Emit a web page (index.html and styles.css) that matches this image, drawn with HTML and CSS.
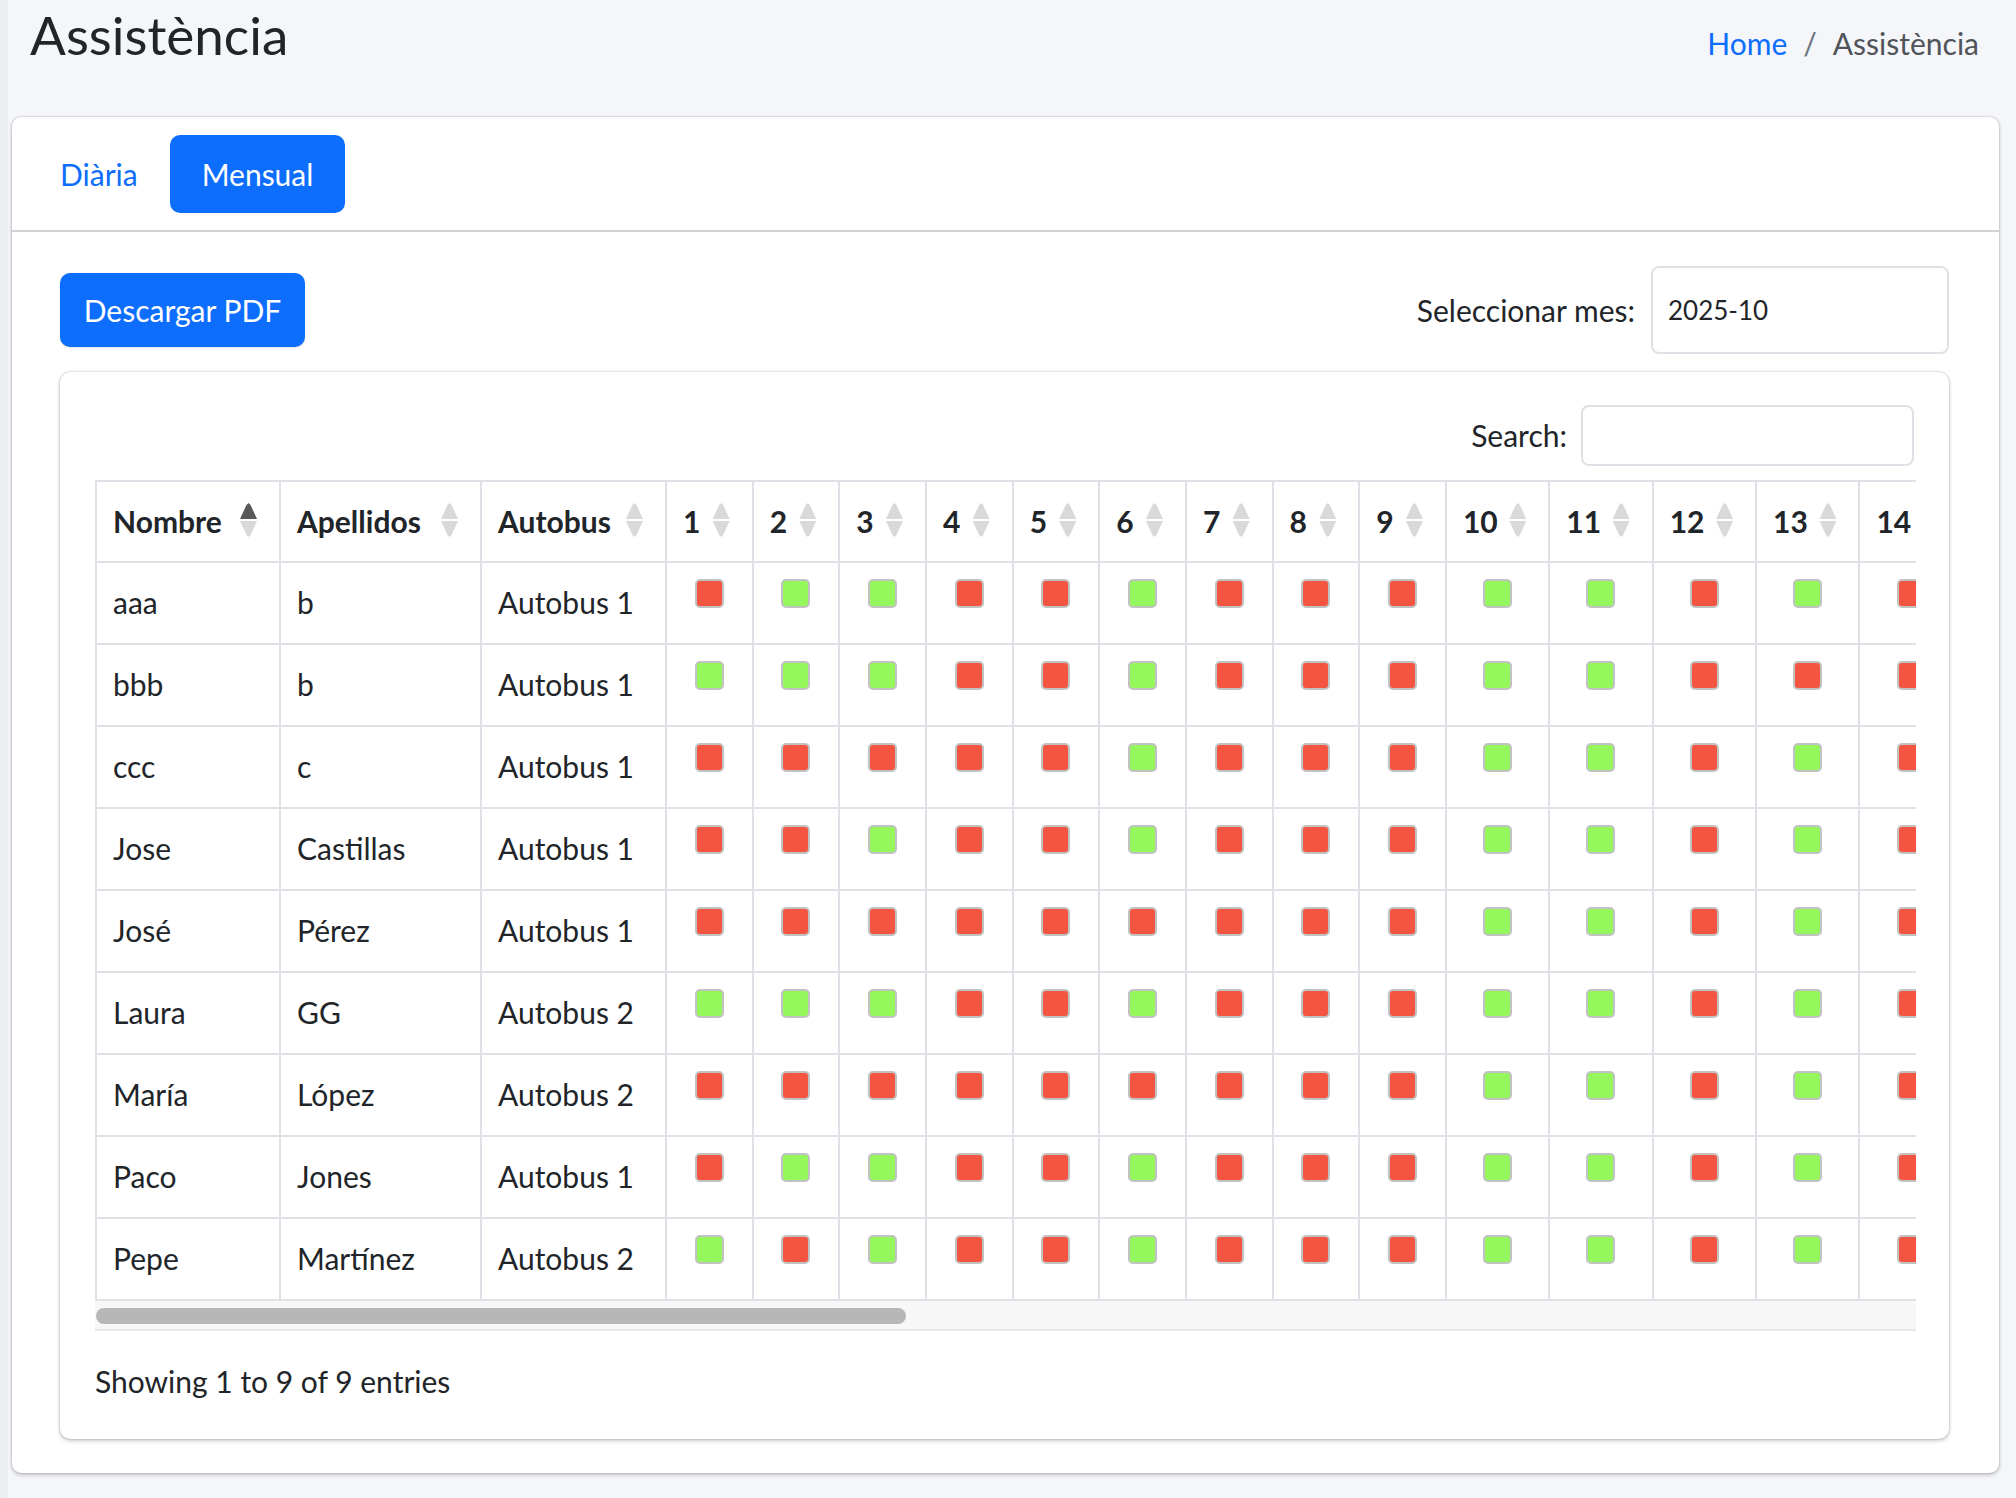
FILE: index.html
```html
<!DOCTYPE html>
<html lang="ca">
<head>
<meta charset="utf-8">
<title>Assistència</title>
<link rel="stylesheet" href="styles.css">
</head>
<body>
<div class="page">
  <header class="content-header">
    <h1 class="title">Assistència</h1>
    <ol class="breadcrumb">
      <li class="crumb"><a href="#" class="crumb-link">Home</a></li>
      <li class="crumb-sep">/</li>
      <li class="crumb active">Assistència</li>
    </ol>
  </header>

  <section class="card">
    <div class="card-header">
      <ul class="pills">
        <li><a href="#" class="pill">Diària</a></li>
        <li><a href="#" class="pill pill-active">Mensual</a></li>
      </ul>
    </div>
    <div class="card-body">
      <div class="toolbar">
        <button class="btn-primary" type="button">Descargar PDF</button>
        <div class="month-field">
          <label class="field-label" for="mes">Seleccionar mes:</label>
          <input id="mes" class="input month-input" type="text" value="2025-10">
        </div>
      </div>

      <div class="dt-card">
        <div class="dt-search">
          <label class="field-label" for="search">Search:</label>
          <input id="search" class="input search-input" type="text" value="">
        </div>
        <div class="dt-scroll">
          <table class="att-table">
            <colgroup>
              <col class="c-nombre"><col class="c-apellidos"><col class="c-autobus">
              <col class="c-day"><col class="c-day"><col class="c-day"><col class="c-day"><col class="c-day"><col class="c-day"><col class="c-day"><col class="c-day"><col class="c-day">
              <col class="c-day2"><col class="c-day2"><col class="c-day2"><col class="c-day2"><col class="c-day2">
            </colgroup>
            <thead>
              <tr>
                <th><div class="th-in"><span>Nombre</span><span class="sort asc"><i class="up"></i><i class="down"></i></span></div></th>
                <th><div class="th-in"><span>Apellidos</span><span class="sort"><i class="up"></i><i class="down"></i></span></div></th>
                <th><div class="th-in"><span>Autobus</span><span class="sort"><i class="up"></i><i class="down"></i></span></div></th>
                <th><div class="th-in"><span>1</span><span class="sort"><i class="up"></i><i class="down"></i></span></div></th>
                <th><div class="th-in"><span>2</span><span class="sort"><i class="up"></i><i class="down"></i></span></div></th>
                <th><div class="th-in"><span>3</span><span class="sort"><i class="up"></i><i class="down"></i></span></div></th>
                <th><div class="th-in"><span>4</span><span class="sort"><i class="up"></i><i class="down"></i></span></div></th>
                <th><div class="th-in"><span>5</span><span class="sort"><i class="up"></i><i class="down"></i></span></div></th>
                <th><div class="th-in"><span>6</span><span class="sort"><i class="up"></i><i class="down"></i></span></div></th>
                <th><div class="th-in"><span>7</span><span class="sort"><i class="up"></i><i class="down"></i></span></div></th>
                <th><div class="th-in"><span>8</span><span class="sort"><i class="up"></i><i class="down"></i></span></div></th>
                <th><div class="th-in"><span>9</span><span class="sort"><i class="up"></i><i class="down"></i></span></div></th>
                <th><div class="th-in"><span>10</span><span class="sort"><i class="up"></i><i class="down"></i></span></div></th>
                <th><div class="th-in"><span>11</span><span class="sort"><i class="up"></i><i class="down"></i></span></div></th>
                <th><div class="th-in"><span>12</span><span class="sort"><i class="up"></i><i class="down"></i></span></div></th>
                <th><div class="th-in"><span>13</span><span class="sort"><i class="up"></i><i class="down"></i></span></div></th>
                <th><div class="th-in"><span>14</span><span class="sort"><i class="up"></i><i class="down"></i></span></div></th>
              </tr>
            </thead>
            <tbody>
              <tr><td>aaa</td><td>b</td><td>Autobus 1</td>
                <td class="day"><span class="st r"></span></td><td class="day"><span class="st g"></span></td><td class="day"><span class="st g"></span></td><td class="day"><span class="st r"></span></td><td class="day"><span class="st r"></span></td><td class="day"><span class="st g"></span></td><td class="day"><span class="st r"></span></td><td class="day"><span class="st r"></span></td><td class="day"><span class="st r"></span></td><td class="day"><span class="st g"></span></td><td class="day"><span class="st g"></span></td><td class="day"><span class="st r"></span></td><td class="day"><span class="st g"></span></td><td class="day"><span class="st r"></span></td></tr>
              <tr><td>bbb</td><td>b</td><td>Autobus 1</td>
                <td class="day"><span class="st g"></span></td><td class="day"><span class="st g"></span></td><td class="day"><span class="st g"></span></td><td class="day"><span class="st r"></span></td><td class="day"><span class="st r"></span></td><td class="day"><span class="st g"></span></td><td class="day"><span class="st r"></span></td><td class="day"><span class="st r"></span></td><td class="day"><span class="st r"></span></td><td class="day"><span class="st g"></span></td><td class="day"><span class="st g"></span></td><td class="day"><span class="st r"></span></td><td class="day"><span class="st r"></span></td><td class="day"><span class="st r"></span></td></tr>
              <tr><td>ccc</td><td>c</td><td>Autobus 1</td>
                <td class="day"><span class="st r"></span></td><td class="day"><span class="st r"></span></td><td class="day"><span class="st r"></span></td><td class="day"><span class="st r"></span></td><td class="day"><span class="st r"></span></td><td class="day"><span class="st g"></span></td><td class="day"><span class="st r"></span></td><td class="day"><span class="st r"></span></td><td class="day"><span class="st r"></span></td><td class="day"><span class="st g"></span></td><td class="day"><span class="st g"></span></td><td class="day"><span class="st r"></span></td><td class="day"><span class="st g"></span></td><td class="day"><span class="st r"></span></td></tr>
              <tr><td>Jose</td><td>Castillas</td><td>Autobus 1</td>
                <td class="day"><span class="st r"></span></td><td class="day"><span class="st r"></span></td><td class="day"><span class="st g"></span></td><td class="day"><span class="st r"></span></td><td class="day"><span class="st r"></span></td><td class="day"><span class="st g"></span></td><td class="day"><span class="st r"></span></td><td class="day"><span class="st r"></span></td><td class="day"><span class="st r"></span></td><td class="day"><span class="st g"></span></td><td class="day"><span class="st g"></span></td><td class="day"><span class="st r"></span></td><td class="day"><span class="st g"></span></td><td class="day"><span class="st r"></span></td></tr>
              <tr><td>José</td><td>Pérez</td><td>Autobus 1</td>
                <td class="day"><span class="st r"></span></td><td class="day"><span class="st r"></span></td><td class="day"><span class="st r"></span></td><td class="day"><span class="st r"></span></td><td class="day"><span class="st r"></span></td><td class="day"><span class="st r"></span></td><td class="day"><span class="st r"></span></td><td class="day"><span class="st r"></span></td><td class="day"><span class="st r"></span></td><td class="day"><span class="st g"></span></td><td class="day"><span class="st g"></span></td><td class="day"><span class="st r"></span></td><td class="day"><span class="st g"></span></td><td class="day"><span class="st r"></span></td></tr>
              <tr><td>Laura</td><td>GG</td><td>Autobus 2</td>
                <td class="day"><span class="st g"></span></td><td class="day"><span class="st g"></span></td><td class="day"><span class="st g"></span></td><td class="day"><span class="st r"></span></td><td class="day"><span class="st r"></span></td><td class="day"><span class="st g"></span></td><td class="day"><span class="st r"></span></td><td class="day"><span class="st r"></span></td><td class="day"><span class="st r"></span></td><td class="day"><span class="st g"></span></td><td class="day"><span class="st g"></span></td><td class="day"><span class="st r"></span></td><td class="day"><span class="st g"></span></td><td class="day"><span class="st r"></span></td></tr>
              <tr><td>María</td><td>López</td><td>Autobus 2</td>
                <td class="day"><span class="st r"></span></td><td class="day"><span class="st r"></span></td><td class="day"><span class="st r"></span></td><td class="day"><span class="st r"></span></td><td class="day"><span class="st r"></span></td><td class="day"><span class="st r"></span></td><td class="day"><span class="st r"></span></td><td class="day"><span class="st r"></span></td><td class="day"><span class="st r"></span></td><td class="day"><span class="st g"></span></td><td class="day"><span class="st g"></span></td><td class="day"><span class="st r"></span></td><td class="day"><span class="st g"></span></td><td class="day"><span class="st r"></span></td></tr>
              <tr><td>Paco</td><td>Jones</td><td>Autobus 1</td>
                <td class="day"><span class="st r"></span></td><td class="day"><span class="st g"></span></td><td class="day"><span class="st g"></span></td><td class="day"><span class="st r"></span></td><td class="day"><span class="st r"></span></td><td class="day"><span class="st g"></span></td><td class="day"><span class="st r"></span></td><td class="day"><span class="st r"></span></td><td class="day"><span class="st r"></span></td><td class="day"><span class="st g"></span></td><td class="day"><span class="st g"></span></td><td class="day"><span class="st r"></span></td><td class="day"><span class="st g"></span></td><td class="day"><span class="st r"></span></td></tr>
              <tr><td>Pepe</td><td>Martínez</td><td>Autobus 2</td>
                <td class="day"><span class="st g"></span></td><td class="day"><span class="st r"></span></td><td class="day"><span class="st g"></span></td><td class="day"><span class="st r"></span></td><td class="day"><span class="st r"></span></td><td class="day"><span class="st g"></span></td><td class="day"><span class="st r"></span></td><td class="day"><span class="st r"></span></td><td class="day"><span class="st r"></span></td><td class="day"><span class="st g"></span></td><td class="day"><span class="st g"></span></td><td class="day"><span class="st r"></span></td><td class="day"><span class="st g"></span></td><td class="day"><span class="st r"></span></td></tr>
            </tbody>
          </table>
        </div>
        <div class="scrollbar"><div class="thumb"></div></div>
        <div class="dt-info">Showing 1 to 9 of 9 entries</div>
      </div>
    </div>
  </section>
</div>
</body>
</html>
```

FILE: styles.css
```css
* { box-sizing: border-box; }

html, body {
  margin: 0;
  padding: 0;
}

body {
  background: linear-gradient(to right, #eceef1 0, #eceef1 8px, #f4f6f9 8px);
  font-family: "Lato", "Open Sans", sans-serif;
  font-size: 30px;
  line-height: 1.5;
  color: #212529;
  min-height: 1498px;
}

.page {
  padding: 0 17px 25px 12px;
}

/* header */
.content-header {
  display: flex;
  justify-content: space-between;
  align-items: baseline;
  height: 117px;
  padding: 3px 20px 0 18px;
}

.title {
  margin: 0;
  font-size: 53px;
  font-weight: 400;
  line-height: 1.2;
  color: #212529;
}

.breadcrumb {
  display: flex;
  list-style: none;
  margin: 0;
  padding: 0;
  font-size: 30px;
}

.crumb-link {
  color: #0d6efd;
  text-decoration: none;
}

.crumb-sep {
  color: #6c757d;
  padding: 0 16px;
}

.crumb.active {
  color: #505459;
}

/* outer card */
.card {
  background: #fff;
  border-radius: 9px;
  box-shadow: 0 0 2px rgba(0, 0, 0, 0.3), 0 2px 4px rgba(0, 0, 0, 0.2);
}

.card-header {
  padding: 18px 16px 17px;
  border-bottom: 2px solid #d2d2d2;
}

.pills {
  display: flex;
  list-style: none;
  margin: 0;
  padding: 0;
}

.pill {
  display: block;
  height: 78px;
  line-height: 78px;
  padding: 0 32px;
  border-radius: 10px;
  color: #0d6efd;
  text-decoration: none;
}

.pill-active {
  background: #0d6efd;
  color: #fff;
}

.card-body {
  padding: 34px 50px 34px 48px;
}

.toolbar {
  display: flex;
  justify-content: space-between;
  align-items: center;
  height: 88px;
}

.btn-primary {
  height: 74px;
  width: 245px;
  padding: 0;
  border: 0;
  border-radius: 10px;
  background: #0d6efd;
  color: #fff;
  font-family: inherit;
  font-size: 30px;
  box-shadow: 0 1px 2px rgba(0, 0, 0, 0.12);
}

.month-field {
  display: flex;
  align-items: center;
  gap: 16px;
}

.field-label {
  color: #212529;
}

.input {
  font-family: inherit;
  color: #212529;
  background: #fff;
  border: 2px solid #dee2e6;
  border-radius: 8px;
  outline: none;
}

.month-input {
  width: 298px;
  height: 88px;
  padding: 0 15px;
  font-size: 26px;
}

/* inner datatable card */
.dt-card {
  margin-top: 18px;
  padding: 33px 33px 34px 35px;
  background: #fff;
  border-radius: 10px;
  box-shadow: 0 0 2px rgba(0, 0, 0, 0.3), 0 2px 4px rgba(0, 0, 0, 0.2);
}

.dt-search {
  display: flex;
  justify-content: flex-end;
  align-items: center;
  gap: 14px;
}

.search-input {
  width: 333px;
  height: 61px;
  padding: 0 12px;
  font-size: 26px;
  margin-right: 2px;
}

.dt-scroll {
  margin-top: 14px;
  overflow: hidden;
}

.att-table {
  table-layout: fixed;
  width: 1869px;
  border-collapse: separate;
  border-spacing: 0;
  border-top: 2px solid #dee2e6;
  border-left: 2px solid #dee2e6;
}

.c-nombre { width: 184px; }
.c-apellidos { width: 201px; }
.c-autobus { width: 185px; }
.c-day { width: 86.67px; }
.c-day2 { width: 103.4px; }

.att-table th,
.att-table td {
  border-right: 2px solid #dee2e6;
  border-bottom: 2px solid #dee2e6;
  line-height: 48px;
  white-space: nowrap;
  overflow: hidden;
}

.att-table th {
  padding: 15px 22px 16px 16px;
  font-weight: 700;
  text-align: left;
}

.att-table td {
  padding: 15px 16px 17px;
  vertical-align: top;
}

.th-in {
  display: flex;
  justify-content: space-between;
  align-items: center;
}

.sort {
  display: flex;
  flex-direction: column;
  gap: 2px;
  margin-top: -2px;
}

.sort i {
  display: block;
  width: 17px;
  height: 16px;
  background: #d9d9d9;
}

.sort .up {
  clip-path: polygon(50% 0, 62% 12%, 100% 100%, 0 100%, 38% 12%);
}

.sort .down {
  clip-path: polygon(0 0, 100% 0, 62% 88%, 50% 100%, 38% 88%);
}

.sort.asc .up {
  background: #585858;
}

.att-table td.day {
  text-align: center;
  padding-left: 0;
  padding-right: 0;
}

.st {
  display: inline-block;
  vertical-align: top;
  margin-top: 1px;
  width: 29px;
  height: 29px;
  border: 2px solid #c2c2c2;
  border-radius: 5px;
}

.st.r { background: #f35541; }
.st.g { background: #94f75b; }

.scrollbar {
  height: 30px;
  background: #f7f7f7;
  border-bottom: 2px solid #e8e8e8;
  padding: 7px 0 0 1px;
}

.thumb {
  width: 810px;
  height: 16px;
  border-radius: 8px;
  background: #b7b7b7;
}

.dt-info {
  margin-top: 26px;
  line-height: 48px;
}
```
